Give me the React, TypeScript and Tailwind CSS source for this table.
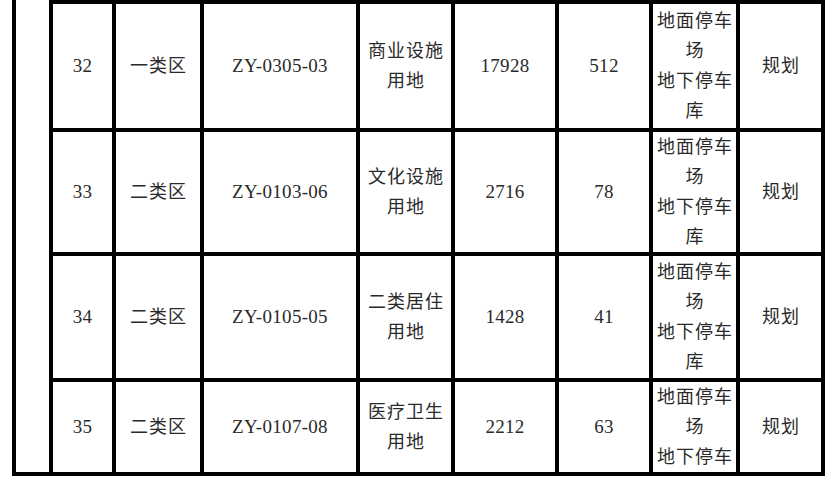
import React from "react";

type Row = {
  no: string;
  zone: string;
  code: string;
  use: string[];
  area: string;
  spaces: string;
  parking: string[];
  status: string;
};

const rows: Row[] = [
  { no: "32", zone: "一类区", code: "ZY-0305-03", use: ["商业设施", "用地"], area: "17928", spaces: "512", parking: ["地面停车", "场", "地下停车", "库"], status: "规划" },
  { no: "33", zone: "二类区", code: "ZY-0103-06", use: ["文化设施", "用地"], area: "2716", spaces: "78", parking: ["地面停车", "场", "地下停车", "库"], status: "规划" },
  { no: "34", zone: "二类区", code: "ZY-0105-05", use: ["二类居住", "用地"], area: "1428", spaces: "41", parking: ["地面停车", "场", "地下停车", "库"], status: "规划" },
  { no: "35", zone: "二类区", code: "ZY-0107-08", use: ["医疗卫生", "用地"], area: "2212", spaces: "63", parking: ["地面停车", "场", "地下停车"], status: "规划" },
];

function Cell({ children, cjk = false }: { children: React.ReactNode; cjk?: boolean }) {
  return (
    <div
      className={
        cjk
          ? "bg-white flex flex-col items-center justify-center text-center leading-[30px] overflow-hidden text-[18px] tracking-[1px] pl-[1px]"
          : "bg-white flex flex-col items-center justify-center text-center leading-[30px] overflow-hidden text-[19px] tracking-[0.3px]"
      }
    >
      {children}
    </div>
  );
}

export default function App() {
  return (
    <div
      className="w-[835px] h-[477px] bg-white pl-[12px] text-[#2a2a2a]"
      style={{ fontFamily: '"Liberation Serif", "Noto Sans CJK SC", serif' }}
    >
      <div className="w-[813px] h-[476px] border-l-4 border-b-4 border-black pl-[33px] overflow-hidden">
        <div className="grid grid-cols-[59px_84px_152px_91px_100px_90px_83px_81px] grid-rows-[124px_120px_122px_90px] gap-[4px] bg-black px-[4px] pt-[4px] w-[776px]">
          {rows.map((r) => (
            <React.Fragment key={r.no}>
              <Cell>{r.no}</Cell>
              <Cell cjk>{r.zone}</Cell>
              <Cell>{r.code}</Cell>
              <Cell cjk>
                {r.use.map((l, i) => (
                  <div key={i}>{l}</div>
                ))}
              </Cell>
              <Cell>{r.area}</Cell>
              <Cell>{r.spaces}</Cell>
              <Cell cjk>
                {r.parking.map((l, i) => (
                  <div key={i}>{l}</div>
                ))}
              </Cell>
              <Cell cjk>{r.status}</Cell>
            </React.Fragment>
          ))}
        </div>
      </div>
    </div>
  );
}
